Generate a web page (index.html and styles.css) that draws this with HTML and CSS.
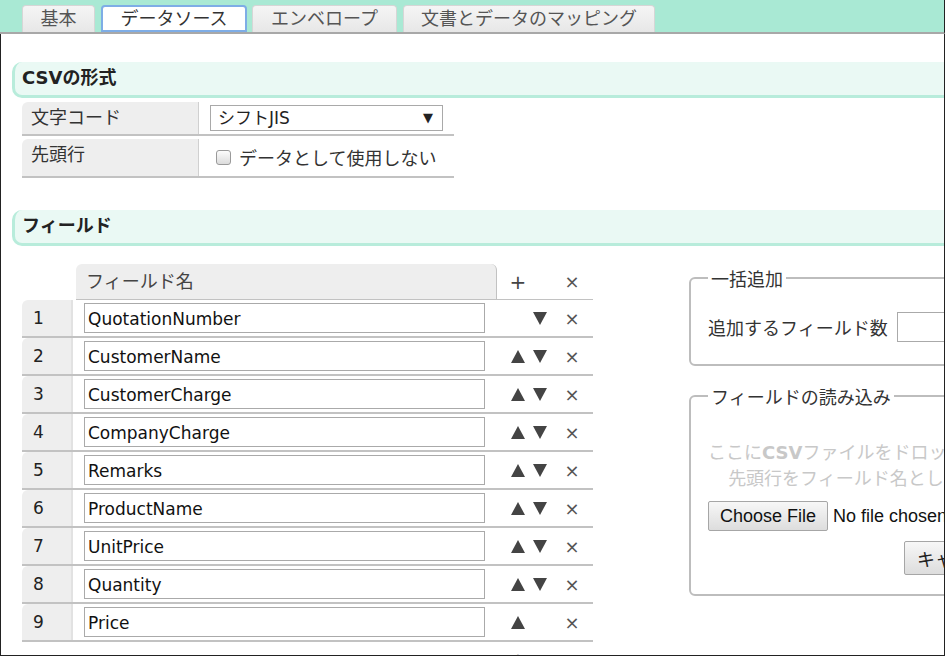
FILE: index.html
```html
<!DOCTYPE html>
<html lang="ja">
<head>
    <meta charset="UTF-8">
    <title>データソース</title>
    <link rel="stylesheet" href="styles.css">
</head>
<body>
<div class="frame">
    <div class="tabbar">
        <div class="tab tab-basic">基本</div>
        <div class="tab tab-source active">データソース</div>
        <div class="tab tab-envelope">エンベロープ</div>
        <div class="tab tab-mapping">文書とデータのマッピング</div>
    </div>

    <div class="content">
        <div class="page">
            <h2 class="section">CSVの形式</h2>
            <div class="form-table">
                <div class="form-row">
                    <div class="form-label">文字コード</div>
                    <div class="form-value">
                        <div class="select-wrap">
                            <select class="select">
                                <option>シフトJIS</option>
                                <option>UTF-8</option>
                            </select>
                            <span class="select-arrow">▼</span>
                        </div>
                    </div>
                </div>
                <div class="form-row">
                    <div class="form-label">先頭行</div>
                    <div class="form-value check-value">
                        <label class="check"><input type="checkbox" class="checkbox">データとして使用しない</label>
                    </div>
                </div>
            </div>

            <h2 class="section section-fields">フィールド</h2>
            <div class="fields-area">
                <div class="fields">
                    <div class="fields-head">
                        <div class="head-name">フィールド名</div>
                        <div class="cell-move"><span class="mv">+</span><span class="mv"></span></div>
                        <div class="cell-del">×</div>
                    </div>
                    <div id="field-rows"></div>
                    <div class="fields-foot">
                        <div class="foot-space"></div>
                        <div class="cell-move"><span class="mv">+</span><span class="mv"></span></div>
                        <div class="cell-del">×</div>
                    </div>
                </div>

                <div class="side">
                    <fieldset class="box">
                        <legend>一括追加</legend>
                        <div class="bulk-row">
                            <span>追加するフィールド数</span>
                            <input type="text" class="bulk-input">
                        </div>
                    </fieldset>
                    <fieldset class="box box-import">
                        <legend>フィールドの読み込み</legend>
                        <div class="drop-text">ここに<b>CSV</b>ファイルをドロップしてください。<br>先頭行をフィールド名として読み込みます</div>
                        <input type="file" class="file">
                        <div class="drop-actions"><button class="btn">キャンセル</button></div>
                    </fieldset>
                </div>
            </div>
        </div>
    </div>
</div>

<script>
    var fields = ['QuotationNumber', 'CustomerName', 'CustomerCharge', 'CompanyCharge',
        'Remarks', 'ProductName', 'UnitPrice', 'Quantity', 'Price'];
    var up = '<svg width="14" height="13" viewBox="0 0 14 13"><polygon points="7,0 14,13 0,13" fill="#444"/></svg>';
    var down = '<svg width="14" height="13" viewBox="0 0 14 13"><polygon points="0,0 14,0 7,13" fill="#444"/></svg>';
    var html = '';
    fields.forEach(function (name, i) {
        html += '<div class="field-row">' +
            '<div class="cell-num">' + (i + 1) + '</div>' +
            '<div class="cell-name"><input type="text" class="name-input" value="' + name + '"></div>' +
            '<div class="cell-move"><span class="mv">' + (i > 0 ? up : '') + '</span>' +
            '<span class="mv">' + (i < fields.length - 1 ? down : '') + '</span></div>' +
            '<div class="cell-del">×</div>' +
            '</div>';
    });
    document.getElementById('field-rows').innerHTML = html;
</script>
</body>
</html>
```

FILE: styles.css
```css
body {
    margin: 0;
    font-family: "DejaVu Sans", "Noto Sans CJK JP", sans-serif;
    font-size: 18px;
    color: #333;
    background-color: #fff;
}

.frame {
    width: 945px;
    height: 656px;
    overflow: hidden;
}

/* tabs */
.tabbar {
    height: 32px;
    background-color: #a9e9d4;
    border-bottom: 2px solid #a8a8a8;
    border-right: 1px solid #222;
    padding-left: 22px;
    display: flex;
    align-items: flex-end;
    gap: 6px;
    font-family: "Noto Sans CJK JP", sans-serif;
}

.tab {
    height: 27px;
    box-sizing: border-box;
    text-align: center;
    background: linear-gradient(#f5f5f5, #e7e7e7);
    border: 1px solid #d6d6d6;
    border-bottom: none;
    border-radius: 4px 4px 0 0;
    line-height: 23px;
    color: #555;
}

.tab-basic { width: 73px; }
.tab-source { width: 146px; }
.tab-envelope { width: 145px; margin-left: -1px; }
.tab-mapping { width: 252px; }

.tab.active {
    background: #fff;
    border: 2px solid #7eade6;
    line-height: 20px;
    color: #333;
}

.content {
    height: 622px;
    box-sizing: border-box;
    border: 1px solid #222;
    border-top: none;
    overflow: hidden;
}

.page {
    width: 1100px;
}

/* section headers */
.section {
    margin: 28px 0 0 11px;
    height: 36px;
    box-sizing: border-box;
    background-color: #eaf9f4;
    border-left: 3px solid #b8ecdb;
    border-bottom: 3px solid #b8ecdb;
    border-radius: 10px 0 0 10px;
    padding-left: 7px;
    font-size: 18px;
    font-weight: bold;
    line-height: 31px;
    color: #222;
}

.section-fields {
    margin-top: 32px;
}

/* csv format table */
.form-table {
    margin: 4px 0 0 21px;
    width: 432px;
}

.form-row {
    display: flex;
    border-bottom: 2px solid #c2c2c2;
    margin-bottom: 3px;
}

.form-label {
    width: 177px;
    flex: none;
    box-sizing: border-box;
    background-color: #eee;
    border-radius: 6px 0 0 0;
    border-right: 1px solid #d0d0d0;
    padding: 3px 9px;
    line-height: 22px;
    font-family: "Noto Sans CJK JP", sans-serif;
}

.form-value {
    padding: 3px 10px 3px 11px;
}

.select-wrap {
    position: relative;
    width: 233px;
}

.select {
    appearance: none;
    -webkit-appearance: none;
    display: block;
    width: 233px;
    height: 26px;
    box-sizing: border-box;
    border: 1px solid #a9a9a9;
    border-radius: 0;
    background: #fff;
    padding: 0 0 0 7px;
    font-family: "DejaVu Sans", "Noto Sans CJK JP", sans-serif;
    font-size: 17px;
    color: #222;
}

.select-arrow {
    position: absolute;
    right: 10px;
    top: 5px;
    font-size: 13px;
    line-height: 16px;
    color: #222;
}

.check-value {
    padding: 7px 10px 7px 17px;
}

.check {
    display: flex;
    align-items: center;
    line-height: 23px;
    font-family: "Noto Sans CJK JP", sans-serif;
}

.checkbox {
    appearance: none;
    -webkit-appearance: none;
    width: 15px;
    height: 15px;
    margin: 0 8px 0 0;
    border: 1px solid #9a9a9a;
    border-radius: 3px;
    background: linear-gradient(#fcfcfc, #dcdcdc);
}

/* fields table */
.fields-area {
    display: flex;
    margin-top: 18px;
    padding-left: 21px;
}

.fields {
    width: 571px;
    flex: none;
}

.fields-head {
    display: flex;
    margin-left: 54px;
    height: 35px;
    border-bottom: 1px solid #c2c2c2;
}

.head-name {
    width: 421px;
    box-sizing: border-box;
    background-color: #eee;
    border-radius: 6px 6px 0 0;
    border-right: 1px solid #c2c2c2;
    padding-left: 10px;
    line-height: 32px;
    font-family: "Noto Sans CJK JP", sans-serif;
    color: #444;
}

.field-row {
    display: flex;
    height: 38px;
    box-sizing: border-box;
    border-bottom: 2px solid #c2c2c2;
}

.cell-num {
    width: 51px;
    flex: none;
    background-color: #eee;
    border-radius: 6px 0 0 0;
    border-right: 2px solid #e2e2e2;
    box-sizing: border-box;
    padding-left: 11px;
    line-height: 37px;
    font-size: 17px;
    color: #222;
}

.cell-name {
    width: 424px;
    flex: none;
    box-sizing: border-box;
    padding: 3px 11px 0 11px;
}

.name-input {
    display: block;
    width: 401px;
    height: 30px;
    box-sizing: border-box;
    border: 1px solid #aaa;
    padding: 1px 3px 0;
    font-family: "DejaVu Sans", sans-serif;
    font-size: 17px;
    color: #111;
}

.cell-move {
    width: 54px;
    flex: none;
    box-sizing: border-box;
    padding-left: 10px;
    display: flex;
    align-items: center;
}

.mv {
    width: 22px;
    display: flex;
    justify-content: center;
    color: #444;
    font-size: 20px;
}

.cell-del {
    width: 42px;
    flex: none;
    display: flex;
    align-items: center;
    justify-content: center;
    color: #555;
    font-size: 18px;
}

.fields-foot {
    display: flex;
    height: 36px;
}

.foot-space {
    width: 475px;
}

/* right side */
.side {
    margin-left: 96px;
    padding-top: 3px;
}

.box {
    margin: 0;
    width: 402px;
    box-sizing: border-box;
    border: 2px solid #bdbdbd;
    border-radius: 6px;
    padding: 0 18px 22px 17px;
    font-family: "Noto Sans CJK JP", sans-serif;
}

.box legend {
    padding: 0 3px;
    line-height: 22px;
    color: #333;
}

.bulk-row {
    display: flex;
    align-items: center;
    gap: 9px;
    padding-top: 23px;
}

.bulk-input {
    width: 80px;
    height: 30px;
    box-sizing: border-box;
    border: 1px solid #aaa;
    flex: none;
}

.box-import {
    margin-top: 19px;
    padding-bottom: 19px;
}

.drop-text {
    padding-top: 32px;
    text-align: center;
    color: #c8c8c8;
    line-height: 24px;
    white-space: nowrap;
}

.drop-text b {
    font-family: "DejaVu Sans", sans-serif;
}

.file {
    display: block;
    margin-top: 12px;
    font-family: "Liberation Sans", Arial, sans-serif;
    font-size: 18px;
    color: #111;
}

.file::file-selector-button {
    height: 30px;
    padding: 0 11px;
    margin-right: 5px;
    font-family: "Liberation Sans", Arial, sans-serif;
    font-size: 18px;
    color: #111;
    background: linear-gradient(#f7f7f7, #dddddd);
    border: 1px solid #a6a6a6;
    border-radius: 2px;
}

.drop-actions {
    margin-top: 10px;
    padding-left: 196px;
}

.btn {
    height: 34px;
    padding: 0 12px;
    font-family: "Noto Sans CJK JP", sans-serif;
    font-size: 18px;
    color: #222;
    background: linear-gradient(#f7f7f7, #dddddd);
    border: 1px solid #a6a6a6;
    border-radius: 2px;
}
```
